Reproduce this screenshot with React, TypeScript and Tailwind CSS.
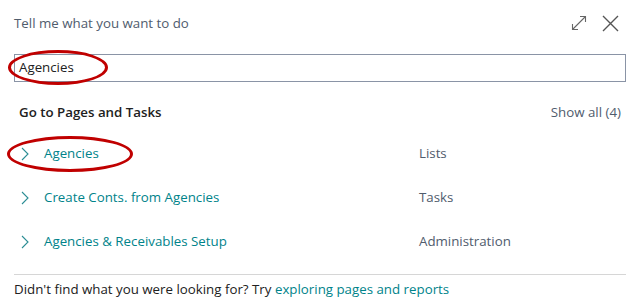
const rows = [
  { name: 'Agencies', kind: 'Lists' },
  { name: 'Create Conts. from Agencies', kind: 'Tasks' },
  { name: 'Agencies & Receivables Setup', kind: 'Administration' },
]

function Chevron() {
  return (
    <svg width="8" height="14" viewBox="0 0 8 14" className="shrink-0">
      <path d="M1 1 L7 7 L1 13" fill="none" stroke="#2b8d94" strokeWidth="1.1" />
    </svg>
  )
}

function Expand() {
  return (
    <svg width="16" height="16" viewBox="0 0 16 16">
      <path d="M1.5 14.5 L14.5 1.5 M9 1.5 H14.5 V7 M1.5 9 V14.5 H7" fill="none" stroke="#666" strokeWidth="1.1" />
    </svg>
  )
}

function Close() {
  return (
    <svg width="17" height="17" viewBox="0 0 17 17">
      <path d="M1 1 L16 16 M16 1 L1 16" fill="none" stroke="#555" strokeWidth="1.4" />
    </svg>
  )
}

export default function App() {
  return (
    <div className="w-[644px] h-[303px] bg-white font-['Open_Sans',sans-serif] text-[13.3px] relative overflow-hidden">
      <div className="pl-[14px] pr-[18px]">
        <div className="flex items-center justify-between pt-[13px] h-[33px]">
          <span className="text-[#505c6d] leading-[20px]">Tell me what you want to do</span>
          <div className="flex items-center gap-[15px] pr-[7px]">
            <Expand />
            <Close />
          </div>
        </div>

        <div className="mt-[21px] h-[28px] border border-[#8a94a6] flex items-center pl-[4px] text-[#212121]">
          Agencies
        </div>

        <div className="mt-[21px] flex items-center justify-between px-[5px] h-[20px]">
          <span className="font-semibold text-[#212121]">Go to Pages and Tasks</span>
          <span className="text-[#505c6d]">Show all (4)</span>
        </div>

        <div className="mt-[9px]">
          {rows.map((r) => (
            <div key={r.name} className="h-[44px] flex items-center">
              <div className="w-[405px] flex items-center gap-[15px] pl-[7px]">
                <Chevron />
                <span className="text-[#00838a]">{r.name}</span>
              </div>
              <span className="text-[#505c6d]">{r.kind}</span>
            </div>
          ))}
        </div>

        <div className="mt-[10px] border-t border-[#d6d6d6]" />
        <div className="h-[20px] mt-[4px] leading-[20px] text-[#212121]">
          Didn't find what you were looking for? Try{' '}
          <span className="text-[#00838a]">exploring pages and reports</span>
        </div>
      </div>

      {/* red annotation ellipses */}
      <div className="absolute left-[8px] top-[50px] w-[100px] h-[35px] rounded-[50%] border-[3px] border-[#c00000]" />
      <div className="absolute left-[7px] top-[136px] w-[126px] h-[36px] rounded-[50%] border-[3px] border-[#c00000]" />
    </div>
  )
}
